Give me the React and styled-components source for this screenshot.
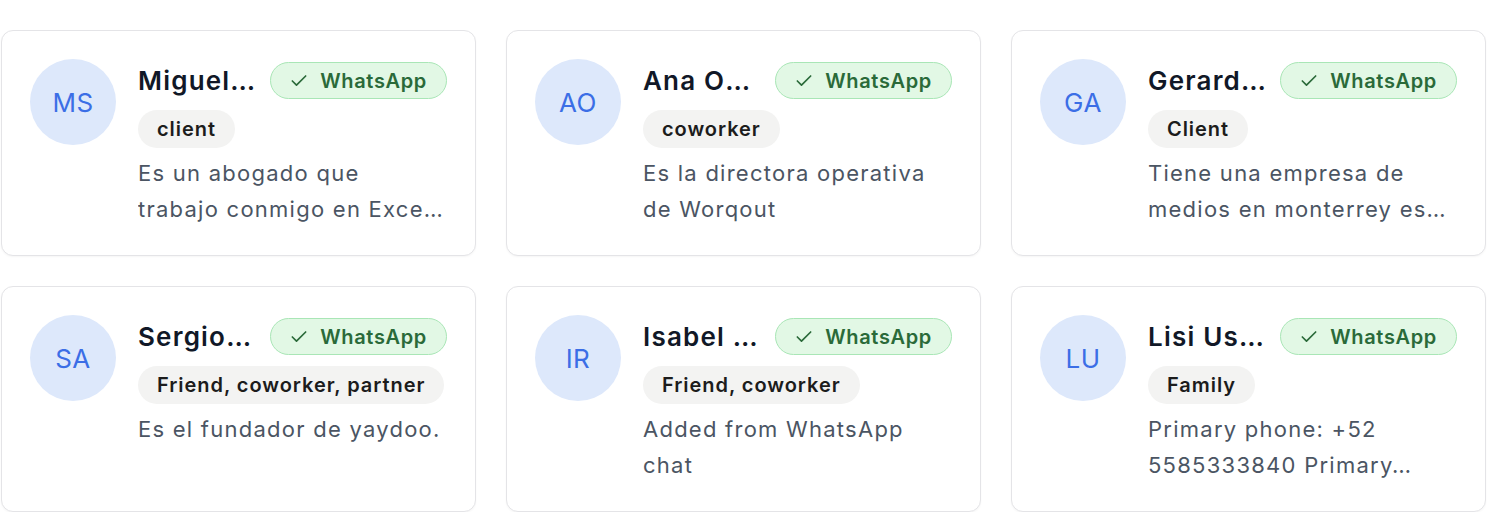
import React from 'react'
import styled, { createGlobalStyle } from 'styled-components'
import { Check } from 'lucide-react'

const GlobalStyle = createGlobalStyle`
  body {
    margin: 0;
    background: #fff;
    font-family: Inter, "Noto Sans", "Liberation Sans", sans-serif;
    -webkit-font-smoothing: antialiased;
  }
`

const Grid = styled.div`
  display: grid;
  grid-template-columns: repeat(3, 475px);
  column-gap: 30px;
  row-gap: 30px;
  padding: 30px 0 0 1px;
`

const Card = styled.div`
  box-sizing: border-box;
  height: 226px;
  display: flex;
  gap: 22px;
  padding: 28px;
  background: #fff;
  border: 1px solid #e4e4e7;
  border-radius: 12px;
  box-shadow: 0 1px 2px rgba(0, 0, 0, 0.04);
`

const Avatar = styled.div`
  flex: none;
  width: 86px;
  height: 86px;
  border-radius: 50%;
  background: #dde8fb;
  color: #3b6ee6;
  font-size: 26px;
  letter-spacing: 0.5px;
  display: flex;
  align-items: center;
  justify-content: center;
`

const Body = styled.div`
  flex: 1;
  min-width: 0;
  display: flex;
  flex-direction: column;
  align-items: flex-start;
`

const NameRow = styled.div`
  width: 100%;
  display: flex;
  align-items: center;
  gap: 14px;
  height: 43px;
`

const Name = styled.div`
  flex: 1;
  min-width: 0;
  font-size: 26px;
  font-weight: 600;
  letter-spacing: 1.2px;
  color: #111827;
  white-space: nowrap;
  overflow: hidden;
  text-overflow: ellipsis;
`

const Badge = styled.span`
  flex: none;
  box-sizing: border-box;
  height: 37px;
  display: inline-flex;
  align-items: center;
  gap: 11px;
  padding: 0 19px 0 18px;
  border: 1px solid #a9e6b6;
  border-radius: 999px;
  background: #e2f8e5;
  color: #2a6a39;
  font-size: 20px;
  font-weight: 600;
  letter-spacing: 0.65px;
`

const Tag = styled.span`
  margin-top: 8px;
  height: 38px;
  display: inline-flex;
  align-items: center;
  padding: 0 19px;
  border-radius: 999px;
  background: #f3f3f2;
  color: #1c1c1c;
  font-size: 20px;
  font-weight: 600;
  letter-spacing: 0.95px;
`

const Description = styled.div`
  margin-top: 7px;
  width: 100%;
  font-size: 22px;
  line-height: 36px;
  letter-spacing: 1.25px;
  color: #4b5563;
`

// each wrapped line keeps its own ellipsis, so a cut lands mid-word like the design
const DescLine = styled.div`
  white-space: nowrap;
  overflow: hidden;
  text-overflow: ellipsis;
`

const contacts = [
  { initials: 'MS', name: 'Miguel Sánchez', tag: 'client', lines: ['Es un abogado que', 'trabajo conmigo en Excelsior hace unos años'] },
  { initials: 'AO', name: 'Ana Ortega', tag: 'coworker', lines: ['Es la directora operativa', 'de Worqout'] },
  { initials: 'GA', name: 'Gerardo Aguilar', tag: 'Client', lines: ['Tiene una empresa de', 'medios en monterrey especializada en radio'] },
  { initials: 'SA', name: 'Sergio Alvarez', tag: 'Friend, coworker, partner', lines: ['Es el fundador de yaydoo.'] },
  { initials: 'IR', name: 'Isabel Ramírez', tag: 'Friend, coworker', lines: ['Added from WhatsApp', 'chat'] },
  { initials: 'LU', name: 'Lisi Usabiaga', tag: 'Family', lines: ['Primary phone: +52', '5585333840 Primary…'] },
]

function ContactCard({ c }) {
  return (
    <Card>
      <Avatar>{c.initials}</Avatar>
      <Body>
        <NameRow>
          <Name>{c.name}</Name>
          <Badge>
            <Check size={20} strokeWidth={2} />
            WhatsApp
          </Badge>
        </NameRow>
        <Tag>{c.tag}</Tag>
        <Description>
          {c.lines.map((l, i) => (
            <DescLine key={i}>{l}</DescLine>
          ))}
        </Description>
      </Body>
    </Card>
  )
}

export default function App() {
  return (
    <>
      <GlobalStyle />
      <Grid>
        {contacts.map((c) => (
          <ContactCard key={c.initials} c={c} />
        ))}
      </Grid>
    </>
  )
}
